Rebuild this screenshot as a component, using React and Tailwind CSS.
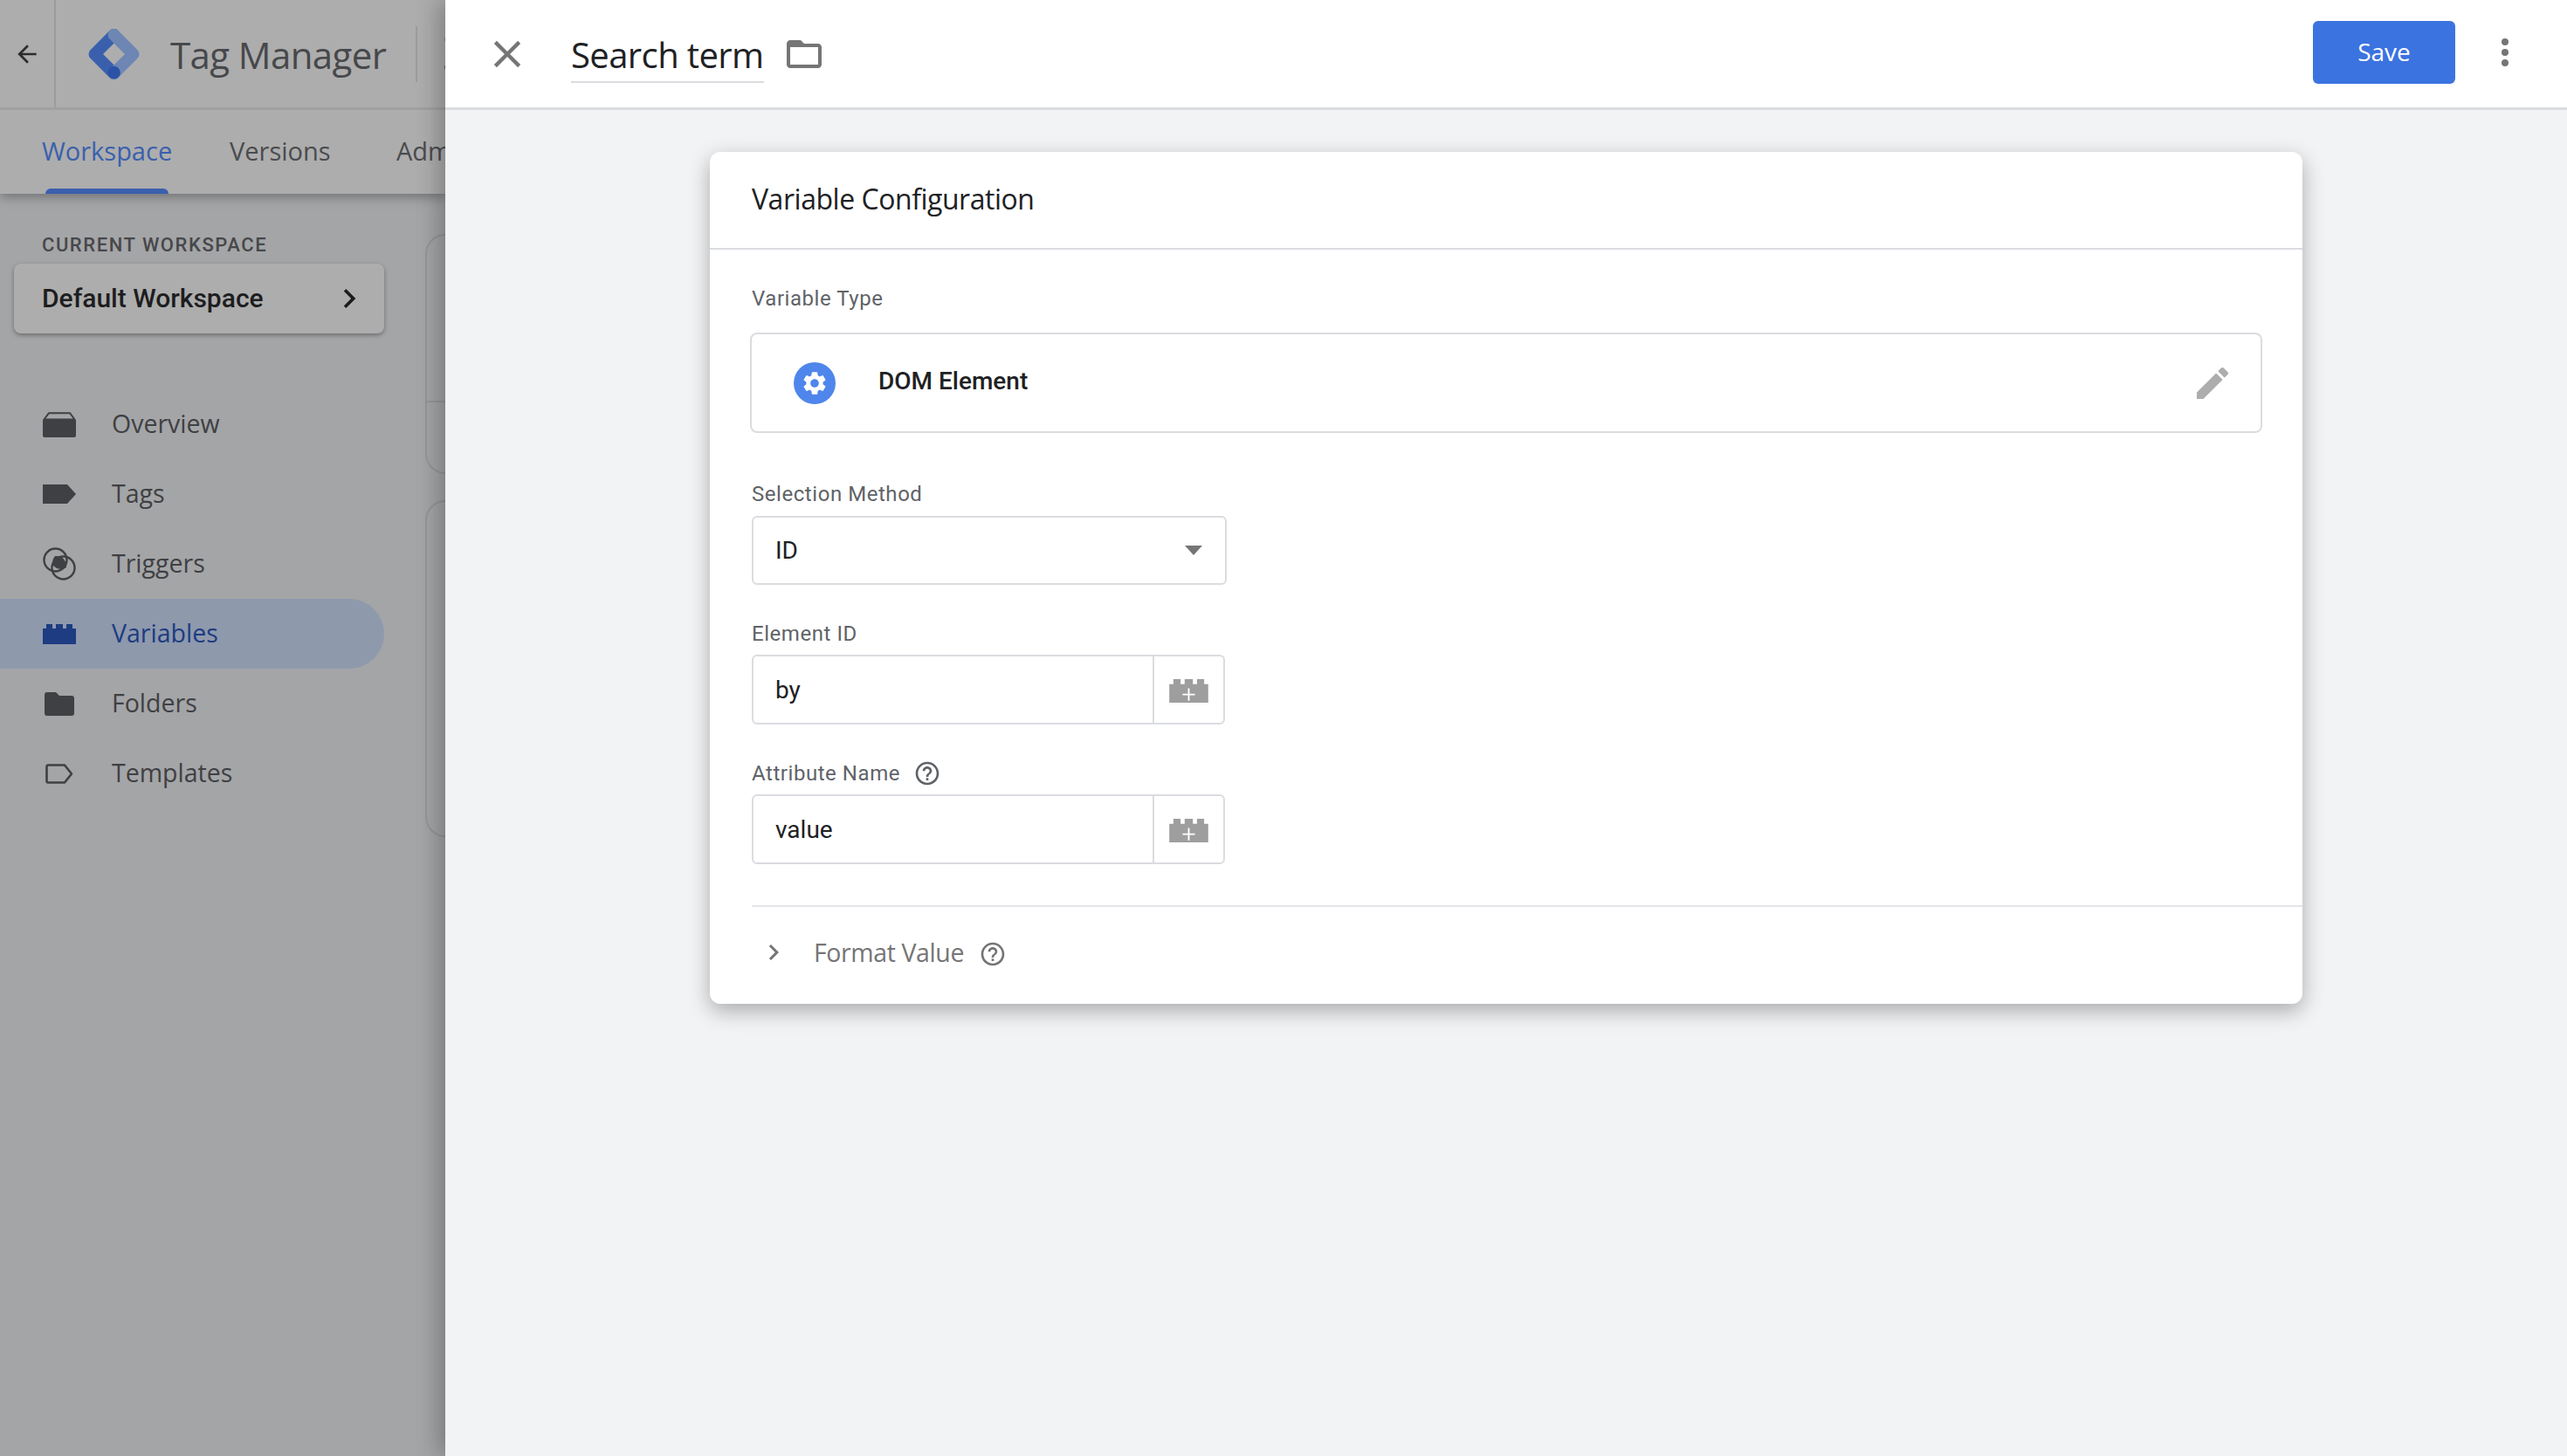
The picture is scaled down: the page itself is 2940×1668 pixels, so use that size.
import { useState } from 'react';

const paths = {
  back: 'M20 11H7.83l5.59-5.59L12 4l-8 8 8 8 1.41-1.41L7.83 13H20v-2z',
  close: 'M19 6.41L17.59 5 12 10.59 6.41 5 5 6.41 10.59 12 5 17.59 6.41 19 12 13.41 17.59 19 19 17.59 13.41 12z',
  folderOutline: 'M20 6h-8l-2-2H4c-1.1 0-1.99.9-1.99 2L2 18c0 1.1.9 2 2 2h16c1.1 0 2-.9 2-2V8c0-1.1-.9-2-2-2zm0 12H4V8h16v10z',
  edit: 'M3 17.25V21h3.75L17.81 9.94l-3.75-3.75L3 17.25zM20.71 7.04c.39-.39.39-1.02 0-1.41l-2.34-2.34c-.39-.39-1.02-.39-1.41 0l-1.83 1.83 3.75 3.75 1.83-1.83z',
  gear: 'M19.14 12.94c.04-.3.06-.61.06-.94 0-.32-.02-.64-.07-.94l2.03-1.58c.18-.14.23-.41.12-.61l-1.92-3.32c-.12-.22-.37-.29-.59-.22l-2.39.96c-.5-.38-1.03-.7-1.62-.94l-.36-2.54c-.04-.24-.24-.41-.48-.41h-3.84c-.24 0-.43.17-.47.41l-.36 2.54c-.59.24-1.13.57-1.62.94l-2.39-.96c-.22-.08-.47 0-.59.22L2.74 8.87c-.12.21-.08.47.12.61l2.03 1.58c-.05.3-.09.63-.09.94s.02.64.07.94l-2.03 1.58c-.18.14-.23.41-.12.61l1.92 3.32c.12.22.37.29.59.22l2.39-.96c.5.38 1.03.7 1.62.94l.36 2.54c.05.24.24.41.48.41h3.84c.24 0 .44-.17.47-.41l.36-2.54c.59-.24 1.13-.56 1.62-.94l2.39.96c.22.08.47 0 .59-.22l1.92-3.32c.12-.22.07-.47-.12-.61l-2.01-1.58zM12 15.6c-1.98 0-3.6-1.62-3.6-3.6s1.62-3.6 3.6-3.6 3.6 1.62 3.6 3.6-1.62 3.6-3.6 3.6z',
  help: 'M11 18h2v-2h-2v2zm1-16C6.48 2 2 6.48 2 12s4.48 10 10 10 10-4.48 10-10S17.52 2 12 2zm0 18c-4.41 0-8-3.59-8-8s3.59-8 8-8 8 3.59 8 8-3.59 8-8 8zm0-14c-2.21 0-4 1.79-4 4h2c0-1.1.9-2 2-2s2 .9 2 2c0 2-3 1.75-3 5h2c0-2.25 3-2.5 3-5 0-2.21-1.79-4-4-4z',
  chevron: 'M10 6L8.59 7.41 13.17 12l-4.58 4.59L10 18l6-6z',
};

function Icon({ d, className }) {
  return (
    <svg viewBox="0 0 24 24" fill="currentColor" className={className}>
      <path d={d} />
    </svg>
  );
}

function Logo() {
  return (
    <svg viewBox="0 0 60 58" className="w-[59px] h-[58px] shrink-0">
      <path d="M30 6.5 L7.5 29 L30 51.5" fill="none" stroke="#3a60ad" strokeWidth="14" strokeLinecap="round" strokeLinejoin="round" />
      <path d="M30 6.5 L52.5 29 L30 51.5" fill="none" stroke="#6e86b4" strokeWidth="14" strokeLinecap="round" strokeLinejoin="round" />
      <circle cx="30" cy="50.5" r="7.4" fill="#2c52a6" />
    </svg>
  );
}

// the "variable" brick, also used with a plus in the input fields
function Brick({ className, plus }) {
  return (
    <svg viewBox="0 0 38 23" fill="currentColor" className={className}>
      <path d="M0 5h4V0h7v5h4V0h8v5h4V0h7v5h4v18H0z" />
      {plus && <path d="M18.2 9h1.6v5.2H25v1.6h-5.2V21h-1.6v-5.2H13v-1.6h5.2z" fill="#fff" />}
    </svg>
  );
}

const navIcons = {
  Overview: (
    <svg viewBox="0 0 38 29" fill="currentColor" className="w-[38px] h-[29px]">
      <path d="M7 1.2h24l5.5 7.3H1.5z" fill="none" stroke="currentColor" strokeWidth="2" strokeLinejoin="round" />
      <path d="M2 8h34a2 2 0 0 1 2 2v17a2 2 0 0 1-2 2H2a2 2 0 0 1-2-2V10a2 2 0 0 1 2-2z" />
    </svg>
  ),
  Tags: (
    <svg viewBox="0 0 38 22" fill="currentColor" className="w-[38px] h-[22px]">
      <path d="M0 0h28l10 11-10 11H0z" />
    </svg>
  ),
  Triggers: (
    <svg viewBox="0 0 38 38" className="w-[38px] h-[38px]">
      <path d="M14 10 a11.5 11.5 0 0 1 13 13 a11.5 11.5 0 0 1 -15 -2 a11.5 11.5 0 0 1 2 -11z" fill="currentColor" />
      <circle cx="14.5" cy="14.5" r="13" fill="none" stroke="currentColor" strokeWidth="2.4" />
      <circle cx="23.5" cy="23.5" r="13" fill="none" stroke="currentColor" strokeWidth="2.4" />
    </svg>
  ),
  Variables: <Brick className="w-[38px] h-[23px]" />,
  Folders: (
    <svg viewBox="0 0 34 27" fill="currentColor" className="w-[34px] h-[27px]">
      <path d="M3 0h10l4 4h14a3 3 0 0 1 3 3v17a3 3 0 0 1-3 3H3a3 3 0 0 1-3-3V3a3 3 0 0 1 3-3z" />
    </svg>
  ),
  Templates: (
    <svg viewBox="0 0 32 23" className="w-[32px] h-[23px]">
      <path d="M3 1.5h19l8 10-8 10H3a1.5 1.5 0 0 1-1.5-1.5V3A1.5 1.5 0 0 1 3 1.5z" fill="none" stroke="currentColor" strokeWidth="2.6" strokeLinejoin="round" />
    </svg>
  ),
};

const navItems = ['Overview', 'Tags', 'Triggers', 'Variables', 'Folders', 'Templates'];

function NavItem({ name, active }) {
  return (
    <div className={`flex items-center h-[80px] w-[440px] rounded-r-[40px] pl-[49px] ${active ? 'bg-[#8e99ac] text-[#1d3c82]' : 'text-[#3f4043]'}`}>
      <span className="w-[38px] flex justify-center shrink-0">{navIcons[name]}</span>
      <span className="ml-[41px] -mt-[2px] text-[28.5px] font-['Open_Sans',sans-serif] font-medium">{name}</span>
    </div>
  );
}

function FieldLabel({ children, help }) {
  return (
    <div className="flex items-center h-[32px] text-[24px] text-[#5f6368] tracking-[0.55px]">
      {children}
      {help && <Icon d={paths.help} className="w-[32px] h-[32px] ml-[15px] text-[#5f6368]" />}
    </div>
  );
}

function VarInput({ value }) {
  return (
    <div className="flex w-[542px] h-[80px] border-2 border-[#dadce0] rounded-[6px] mt-[8px]">
      <div className="flex-1 flex items-center pl-[25px] pt-[2px] text-[28px] text-[#202124]">{value}</div>
      <div className="w-[81px] pt-[3px] border-l-2 border-[#dadce0] flex items-center justify-center text-[#9e9e9e]">
        <Brick plus className="w-[45px] h-[27px]" />
      </div>
    </div>
  );
}

export default function App() {
  const [title] = useState('Search term');

  return (
    <div className="flex w-[2940px] h-[1668px] overflow-hidden font-['Roboto',sans-serif] bg-[#a4a5a7]">
      {/* page behind the sheet */}
      <div className="w-[510px] shrink-0 overflow-hidden flex flex-col">
        <div className="relative z-10 bg-[#adadad] shadow-[0_4px_12px_rgba(0,0,0,0.3)] shrink-0">
          <div className="flex items-center h-[126px] border-b-[3px] border-[#a0a0a0]">
            <div className="w-[64px] h-full border-r-2 border-[#9c9c9c] flex items-center justify-center shrink-0">
              <Icon d={paths.back} className="w-[32px] h-[32px] text-[#2b2c2e]" />
            </div>
            <div className="ml-[37px] shrink-0"><Logo /></div>
            <span className="ml-[35px] pt-[2px] text-[42px] leading-none font-['Open_Sans',sans-serif] text-[#47484b] whitespace-nowrap tracking-[-0.6px] shrink-0">Tag Manager</span>
            <div className="ml-[34px] w-[2px] h-[64px] bg-[#9c9c9c] shrink-0" />
            <span className="ml-[29px] text-[50px] leading-none text-[#3f4043] whitespace-nowrap shrink-0">Z</span>
          </div>
          <div className="flex h-[96px] pl-[48px] pb-[3px] text-[29px] font-['Open_Sans',sans-serif] font-medium whitespace-nowrap">
            <div className="relative flex items-center w-[215px] shrink-0">
              <span className="text-[#3a60ad]">Workspace</span>
              <div className="absolute -bottom-[3px] left-[4px] w-[141px] h-[6px] rounded-t-[6px] bg-[#3a60ad]" />
            </div>
            <div className="flex items-center w-[191px] shrink-0 text-[#4a4b4e]">Versions</div>
            <div className="flex items-center shrink-0 text-[#4a4b4e]">Admin</div>
          </div>
        </div>

        <div className="flex flex-1 min-h-0">
          <div className="w-[487px] shrink-0">
            <div className="pl-[48px] pt-[47px] text-[22px] leading-[24px] text-[#47484b] tracking-[1.55px] font-medium">CURRENT WORKSPACE</div>
            <div className="ml-[16px] mt-[9px] w-[424px] h-[80px] rounded-[8px] bg-[#adadad] shadow-[0_2px_5px_rgba(0,0,0,0.35)] flex items-center justify-between pl-[32px] pr-[18px]">
              <span className="text-[30px] font-medium text-[#1d1d1f] -mt-[2px]">Default Workspace</span>
              <Icon d={paths.chevron} className="w-[44px] h-[44px] text-[#1d1d1f]" />
            </div>
            <div className="mt-[64px]">
              {navItems.map((n) => <NavItem key={n} name={n} active={n === 'Variables'} />)}
            </div>
          </div>
          <div className="flex-1 pt-[46px]">
            <div className="h-[275px] border-2 border-r-0 border-[#959698] rounded-l-[24px]">
              <div className="h-[191px] border-b-2 border-[#959698]" />
            </div>
            <div className="mt-[30px] h-[386px] border-2 border-r-0 border-[#959698] rounded-l-[24px]" />
          </div>
        </div>
      </div>

      {/* side sheet */}
      <div className="relative z-20 flex-1 flex flex-col bg-[#f1f3f4] shadow-[-8px_0_24px_rgba(0,0,0,0.25)]">
        <div className="flex items-center h-[126px] shrink-0 bg-white border-b-[3px] border-[#dadce0] pl-[45px]">
          <Icon d={paths.close} className="w-[52px] h-[52px] text-[#757575]" />
          <div className="ml-[47px] h-[66px] pt-[4px] flex items-center border-b-2 border-[#dadce0] text-[40px] leading-none font-['Open_Sans',sans-serif] text-[#202124] tracking-[-0.6px] whitespace-nowrap">{title}</div>
          <Icon d={paths.folderOutline} className="ml-[22px] w-[48px] h-[48px] text-[#757575]" />
          <div className="flex-1" />
          <button className="-mt-[3px] pb-[2px] w-[163px] h-[72px] rounded-[6px] bg-[#3b73e0] text-white text-[28px] font-['Open_Sans',sans-serif] font-medium">Save</button>
          <div className="-mt-[3px] ml-[53px] mr-[67px] flex flex-col gap-[4px]">
            <span className="w-[8px] h-[8px] rounded-full bg-[#757575]" />
            <span className="w-[8px] h-[8px] rounded-full bg-[#757575]" />
            <span className="w-[8px] h-[8px] rounded-full bg-[#757575]" />
          </div>
        </div>

        <div className="pl-[303px] pt-[48px]">
          <div className="w-[1824px] h-[976px] bg-white rounded-[12px] shadow-[0_8px_24px_rgba(0,0,0,0.3)] flex flex-col">
            <div className="h-[112px] shrink-0 flex items-center pl-[48px] pb-[3px] border-b-2 border-[#dadce0] text-[32px] font-['Open_Sans',sans-serif] text-[#202124] tracking-[-0.47px]">Variable Configuration</div>

            <div className="pl-[46px] pr-[46px] pt-[40px]">
              <div className="pl-[2px]"><FieldLabel>Variable Type</FieldLabel></div>
              <div className="mt-[23px] h-[115px] border-2 border-[#dadce0] rounded-[8px] flex items-center pl-[48px] pr-[31px]">
                <div className="w-[48px] h-[48px] rounded-full bg-[#4f86ec] flex items-center justify-center text-white">
                  <Icon d={paths.gear} className="w-[32px] h-[32px]" />
                </div>
                <span className="ml-[49px] text-[28px] font-medium text-[#202124] -mt-[4px]">DOM Element</span>
                <div className="flex-1" />
                <Icon d={paths.edit} className="w-[48px] h-[48px] text-[#adadad]" />
              </div>

              <div className="pl-[2px] mt-[54px]">
                <FieldLabel>Selection Method</FieldLabel>
                <div className="mt-[9px] w-[544px] h-[79px] border-2 border-[#dadce0] rounded-[6px] flex items-center justify-between pl-[25px] pr-[26px] text-[28px] text-[#202124]">
                  ID
                  <span className="w-0 h-0 border-x-[10px] border-x-transparent border-t-[11px] border-t-[#757575]" />
                </div>
              </div>
              <div className="pl-[2px] mt-[40px]">
                <FieldLabel>Element ID</FieldLabel>
                <VarInput value="by" />
              </div>
              <div className="pl-[2px] mt-[40px]">
                <FieldLabel help>Attribute Name</FieldLabel>
                <VarInput value="value" />
              </div>
            </div>

            <div className="ml-[48px] mt-[47px] h-[113px] pb-[6px] border-t-2 border-[#e4e5e8] flex items-center pl-[7px]">
              <Icon d={paths.chevron} className="w-[36px] h-[36px] text-[#757575] -mt-[2px]" />
              <span className="ml-[28px] text-[28.5px] font-['Open_Sans',sans-serif] font-medium text-[#757575] tracking-[-0.4px]">Format Value</span>
              <Icon d={paths.help} className="ml-[17px] w-[32px] h-[32px] text-[#757575] mt-[3px]" />
            </div>
          </div>
        </div>
      </div>
    </div>
  );
}
